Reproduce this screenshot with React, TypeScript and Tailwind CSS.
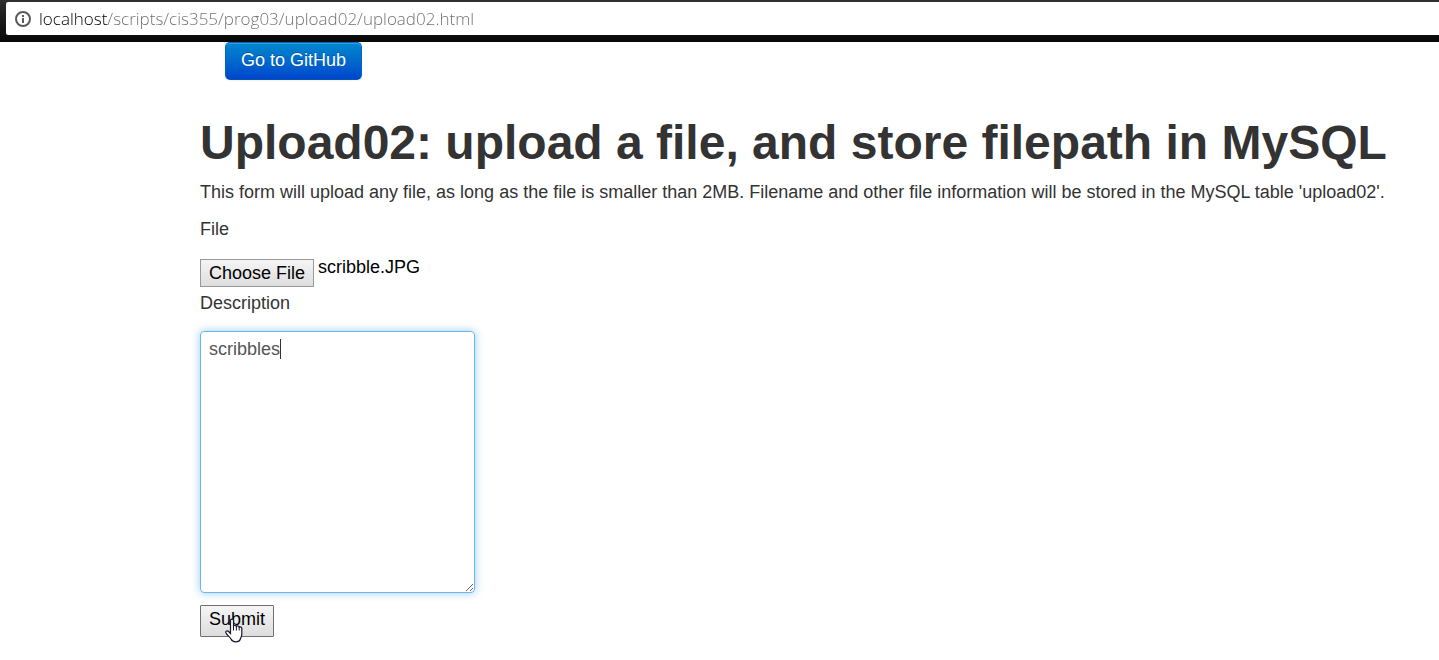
import { useRef, useState } from 'react';
import type { ChangeEvent } from 'react';

function AddressBar() {
  return (
    <header className="border-t-2 border-[#302e2f] bg-gradient-to-b from-[#2b2b2b] to-[#080808] pb-[7px] pl-1.5">
      <div className="flex h-[33px] items-center gap-[7px] rounded-l-xs bg-white pl-2">
        <svg viewBox="0 0 18 18" className="size-[18px] shrink-0" fill="none" stroke="#5a5a5a" strokeWidth="2" aria-hidden="true">
          <circle cx="9" cy="9" r="7" />
          <path d="M9 8v5M9 5v2" />
        </svg>
        <input
          type="text"
          aria-label="Address"
          defaultValue="localhost/scripts/cis355/prog03/upload02/upload02.html"
          className="min-w-0 flex-1 bg-[linear-gradient(to_right,#000_69px,#6c6c6c_69px)] bg-clip-text font-['Open_Sans',sans-serif] text-[17px] leading-6 font-light text-transparent outline-none"
        />
      </div>
    </header>
  );
}

function HandPointer() {
  return (
    <svg viewBox="0 0 20 26" className="pointer-events-none absolute top-3 left-6 h-[26px] w-5" aria-hidden="true">
      <path
        d="M6.500 14.500V3.600c0-2 3-2 3 0v5.300c.6-1 2.700-.8 2.900.5.800-.8 2.600-.5 2.800.7 1-.5 2.600 0 2.600 1.300V17c0 2.500-1 3.500-1.500 5-.4 1.800-2 2.800-4.800 2.800-2.600 0-3.700-1-4.500-2.800C6.200 20.200 3 18.500 1.800 15.500c-.4-1.600 1.600-2.200 2.800-1l1.900 2z"
        fill="#fff"
        stroke="#15152a"
        strokeWidth="1.200"
      />
      <path d="M9.500 8.500v5M12.400 9.400v4.100M15.200 10v3.500" stroke="#15152a" fill="none" />
    </svg>
  );
}

export default function App() {
  const picker = useRef<HTMLInputElement>(null);
  const [fileName, setFileName] = useState('scribble.JPG');
  const [description, setDescription] = useState('scribbles');

  const pickFile = (e: ChangeEvent<HTMLInputElement>) => {
    const file = e.target.files?.[0];
    if (file) setFileName(file.name);
  };

  return (
    <div className="min-h-screen bg-white font-['Liberation_Sans',Arial,sans-serif] text-[18px] leading-[25px] text-[#333]">
      <AddressBar />
      <main className="pb-4 pl-[200px]">
        <div className="flex pl-[25px]">
          <a
            href="https://github.com"
            className="rounded-[5px] border border-[#0064cd] border-b-[#0058b0] bg-gradient-to-b from-[#0088cc] to-[#0044cc] px-[15px] pt-[5px] pb-1.5 text-white shadow-[inset_0_1px_0_rgba(255,255,255,0.2),0_1px_2px_rgba(0,0,0,0.05)] [text-shadow:0_-1px_0_rgba(0,0,0,0.25)]"
          >
            Go to GitHub
          </a>
        </div>
        <h1 className="mt-[38px] text-[48px] leading-[50px] font-bold whitespace-nowrap">
          Upload02: upload a file, and store filepath in MySQL
        </h1>
        <p className="mt-3 whitespace-nowrap">
          This form will upload any file, as long as the file is smaller than 2MB. Filename and other file information will be stored in the MySQL table 'upload02'.
        </p>
        <form onSubmit={(e) => e.preventDefault()} className="mt-3 flex flex-col items-start">
          <label htmlFor="file">File</label>
          <div className="relative mt-[17px] flex gap-1 text-black">
            <input id="file" ref={picker} type="file" onChange={pickFile} tabIndex={-1} className="hidden" />
            <button
              type="button"
              onClick={() => picker.current?.click()}
              className="h-7 border border-[#999] bg-gradient-to-b from-[#f5f5f5] to-[#dddddd] px-2"
            >
              Choose File
            </button>
            <span className="-mt-1">{fileName}</span>
          </div>
          <label htmlFor="description" className="mt-1">Description</label>
          <div className="relative mt-[15px] flex">
            <textarea
              id="description"
              value={description}
              onChange={(e) => setDescription(e.target.value)}
              className="h-[262px] w-[275px] rounded-[4px] border border-[#6db5ee] px-2 py-[5px] text-[#555] shadow-[0_0_8px_rgba(82,168,236,0.6)] outline-none"
            />
            <span className="pointer-events-none absolute top-2 left-20 h-5 w-px bg-[#333]" />
          </div>
          <div className="relative mt-3">
            <button type="submit" className="h-8 rounded-[1px] border border-[#707070] bg-gradient-to-b from-[#f5f5f5] to-[#dddddd] px-2 pb-1 text-black">
              Submit
            </button>
            <HandPointer />
          </div>
        </form>
      </main>
    </div>
  );
}
